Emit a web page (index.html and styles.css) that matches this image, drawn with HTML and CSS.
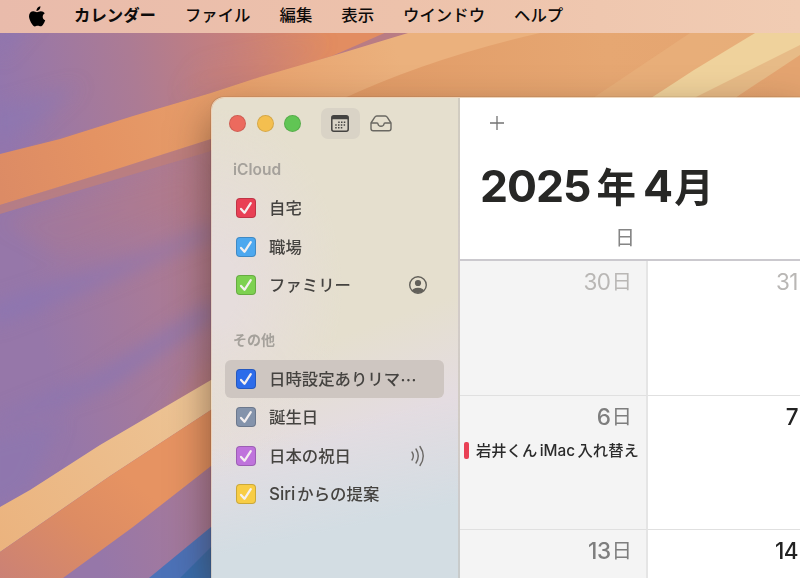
FILE: index.html
```html
<!DOCTYPE html>
<html lang="ja">
<head>
  <meta charset="UTF-8">
  <meta name="viewport" content="width=device-width, initial-scale=1.0">
  <title>カレンダー</title>
  <link rel="stylesheet" href="styles.css">
</head>
<body>
<svg class="wallpaper" viewBox="0 0 800 578" preserveAspectRatio="none" aria-hidden="true">
  <defs>
    <linearGradient id="base" gradientUnits="userSpaceOnUse" x1="0" y1="180" x2="230" y2="120">
      <stop offset="0" stop-color="#9677a9"/>
      <stop offset="0.5" stop-color="#a87a98"/>
      <stop offset="1" stop-color="#b97c84"/>
    </linearGradient>
    <linearGradient id="top" gradientUnits="userSpaceOnUse" x1="0" y1="90" x2="330" y2="30">
      <stop offset="0" stop-color="#9376ad"/>
      <stop offset="0.4" stop-color="#ac7b94"/>
      <stop offset="0.7" stop-color="#c67f7c"/>
      <stop offset="1" stop-color="#e28d61"/>
    </linearGradient>
    <linearGradient id="orange" gradientUnits="userSpaceOnUse" x1="0" y1="190" x2="400" y2="60">
      <stop offset="0" stop-color="#dc8b65"/>
      <stop offset="0.25" stop-color="#e49363"/>
      <stop offset="0.6" stop-color="#e7a06c"/>
      <stop offset="1" stop-color="#ebb17d"/>
    </linearGradient>
    <linearGradient id="right" gradientUnits="userSpaceOnUse" x1="350" y1="90" x2="780" y2="60">
      <stop offset="0" stop-color="#e19b67"/>
      <stop offset="0.6" stop-color="#e6a772"/>
      <stop offset="1" stop-color="#e4a470"/>
    </linearGradient>
    <linearGradient id="cream" gradientUnits="userSpaceOnUse" x1="0" y1="550" x2="210" y2="400">
      <stop offset="0" stop-color="#ebb37e"/>
      <stop offset="1" stop-color="#edc596"/>
    </linearGradient>
    <linearGradient id="lower" gradientUnits="userSpaceOnUse" x1="10" y1="600" x2="120" y2="470">
      <stop offset="0" stop-color="#c98077"/>
      <stop offset="0.6" stop-color="#dd8c63"/>
      <stop offset="1" stop-color="#e69362"/>
    </linearGradient>
    <filter id="soft" x="-20%" y="-20%" width="140%" height="140%"><feGaussianBlur stdDeviation="9"/></filter>
  </defs>
  <rect width="800" height="578" fill="url(#base)"/>
  <g filter="url(#soft)">
    <path d="M-10 306 150 252 215 225 215 235 90 288 -10 326Z" fill="#8976b4" opacity=".75"/>
    <path d="M-10 420 90 380 215 300 215 316 110 385 -10 426Z" fill="#8575b5" opacity=".75"/>
    <path d="M-20 440 60 420 30 490 -20 520Z" fill="#8b76b3" opacity=".6"/>
    <path d="M0 222 190 170 210 200 60 255Z" fill="#ba7f82" opacity=".2"/>
    <path d="M140 450 215 350 215 385Z" fill="#c07f76" opacity=".6"/>
  </g>
  <path d="M0 0H460L332 56 211 93 0 154Z" fill="url(#top)"/>
  <g filter="url(#soft)">
    <path d="M-10 110 80 85 30 130 -10 140Z" fill="#8b76b3" opacity=".55"/>
    <path d="M0 0H50L0 60Z" fill="#8976b4" opacity=".5"/>
    <path d="M200 66 330 40 260 75 180 95Z" fill="#cd8070" opacity=".2"/>
  </g>
  <path d="M0 205 211 139V151L0 214Z" fill="#c28077" opacity=".7"/>
  <path d="M0 154 60 139 133 116 211 93 260 77 332 56 408 33H800V150H211V139L120 168 0 205Z" fill="url(#orange)"/>
  <path d="M340 100Q430 58 540 33H800V100Z" fill="url(#right)"/>
  <path d="M590 100 690 33H755L650 100Z" fill="#e9b47f" opacity=".6"/>
  <path d="M651 98 694 70 755 33H800V46L735 98Z" fill="#efd29c"/>
  <path d="M694 98 800 45V55L735 98Z" fill="#e7bb87"/>
  <path d="M0 507 30 490 100 445 211 380H220V404L110 476 0 552Z" fill="url(#cream)"/>
  <path d="M0 552 110 476 220 404V459L133 527 63 578H0Z" fill="url(#lower)"/>
  <path d="M149 578 211 527H230V578Z" fill="#4c72b8"/>
  <path d="M180 578 211 547H230V578Z" fill="#376cad"/>
</svg>

<header class="menubar">
  <svg class="apple" viewBox="0 0 17 21" aria-hidden="true">
    <path d="M11.9 0.2C12 1.5 11.5 2.7 10.8 3.6 10 4.5 9 5 8 4.9 7.9 3.7 8.4 2.6 9.1 1.8 9.8.9 10.9.3 11.9.2Z"/>
    <path d="M16.3 7.2C14.9 8 14.2 9.2 14.2 10.7 14.2 12.4 15.2 13.7 16.7 14.3 16.2 15.8 15.5 17.2 14.6 18.4 13.9 19.4 13.2 20.3 12.1 20.3 11 20.3 10.6 19.7 9.2 19.7 7.9 19.7 7.4 20.4 6.3 20.4 5.2 20.4 4.4 19.4 3.6 18.3 1.8 15.9.5 12.1.5 10.3.5 7.2 2.5 5.3 4.9 5.3 6.3 5.3 7.5 6.2 8.5 6.2 9.4 6.2 10.7 5.2 12.4 5.2 13.9 5.2 15.4 5.9 16.3 7.2Z"/>
  </svg>
  <nav class="menus">
    <span class="app-name">カレンダー</span>
    <span>ファイル</span>
    <span>編集</span>
    <span>表示</span>
    <span>ウインドウ</span>
    <span>ヘルプ</span>
  </nav>
</header>

<div class="window">
  <aside class="sidebar">
    <div class="toolbar">
      <span class="light close"></span>
      <span class="light minimize"></span>
      <span class="light expand"></span>
      <button class="tool active" aria-label="カレンダー">
        <svg width="18" height="17" viewBox="0 0 18 17">
          <rect x=".8" y=".8" width="16.4" height="15.4" rx="2" fill="none" stroke="#444341" stroke-width="1.5"/>
          <path d="M1 1H17V4.3H1Z" fill="#444341"/>
          <path d="M7.2 7.2H15M4.2 10H15M4.2 12.8H12.2" stroke="#444341" stroke-width="1.5" stroke-dasharray="1.5 1.3"/>
        </svg>
      </button>
      <button class="tool" aria-label="受信">
        <svg width="22" height="17" viewBox="0 0 22 17" fill="none" stroke="#6a6862" stroke-width="1.4" stroke-linejoin="round">
          <path d="M1 8 4.8 2.2Q5.5 1 6.8 1H15.2Q16.5 1 17.2 2.2L21 8V13.5Q21 15.7 18.8 15.7H3.2Q1 15.7 1 13.5Z"/>
          <path d="M1 8H7Q8 8 8 9 8.3 11.2 11 11.2T14 9Q14 8 15 8H21"/>
        </svg>
      </button>
    </div>

    <h2 class="group-title">iCloud</h2>
    <ul class="calendars">
      <li><span class="check red"><svg viewBox="0 0 20 20"><path d="M4.5 11 8.3 15.3 15.3 4.7"/></svg></span>自宅</li>
      <li><span class="check sky"><svg viewBox="0 0 20 20"><path d="M4.5 11 8.3 15.3 15.3 4.7"/></svg></span>職場</li>
      <li><span class="check green"><svg viewBox="0 0 20 20"><path d="M4.5 11 8.3 15.3 15.3 4.7"/></svg></span>ファミリー
        <svg class="badge" width="20" height="20" viewBox="0 0 20 20">
          <defs><clipPath id="face"><circle cx="10" cy="10" r="8"/></clipPath></defs>
          <circle cx="10" cy="10" r="8.3" fill="none" stroke="#62605a" stroke-width="1.4"/>
          <circle cx="10" cy="8" r="3.1" fill="#62605a"/>
          <ellipse cx="10" cy="16.8" rx="6.5" ry="4" fill="#62605a" clip-path="url(#face)"/>
        </svg>
      </li>
    </ul>

    <h2 class="group-title other">その他</h2>
    <ul class="calendars">
      <li class="selected"><span class="check blue"><svg viewBox="0 0 20 20"><path d="M4.5 11 8.3 15.3 15.3 4.7"/></svg></span>日時設定ありリマ<span class="dots">…</span></li>
      <li><span class="check gray"><svg viewBox="0 0 20 20"><path d="M4.5 11 8.3 15.3 15.3 4.7"/></svg></span>誕生日</li>
      <li><span class="check purple"><svg viewBox="0 0 20 20"><path d="M4.5 11 8.3 15.3 15.3 4.7"/></svg></span>日本の祝日
        <svg class="badge" width="20" height="22" viewBox="0 0 20 22" fill="none" stroke="#6b6865" stroke-width="1.4" stroke-linecap="round">
          <path d="M4 7Q6.6 11 4 15M8 4Q12.5 11 8 18M12 1.5Q18.5 11 12 20.5"/>
        </svg>
      </li>
      <li><span class="check yellow"><svg viewBox="0 0 20 20"><path d="M4.5 11 8.3 15.3 15.3 4.7"/></svg></span><span class="latin">Siri</span>からの提案</li>
    </ul>
  </aside>

  <main class="month">
    <div class="month-head">
      <svg class="add" width="14" height="14" viewBox="0 0 14 14"><path d="M7 0V14M0 7H14"/></svg>
      <h1><span class="num">2025</span>年<span class="num inner">4</span>月</h1>
      <div class="weekday">日</div>
    </div>
    <div class="grid">
      <div class="day weekend outside"><div class="date">30<span>日</span></div></div>
      <div class="day outside"><div class="date">31</div></div>
      <div class="day weekend">
        <div class="date">6<span>日</span></div>
        <div class="event"><i></i>岩井くん<span class="word">iMac</span>入れ替え</div>
      </div>
      <div class="day"><div class="date">7</div></div>
      <div class="day weekend"><div class="date">13<span>日</span></div></div>
      <div class="day"><div class="date">14</div></div>
    </div>
  </main>
</div>
</body>
</html>
```

FILE: styles.css
```css
* {
  margin: 0;
  padding: 0;
  box-sizing: border-box;
}

body {
  position: relative;
  width: 800px;
  height: 578px;
  overflow: hidden;
  font-family: Inter, "Noto Sans CJK JP", sans-serif;
  font-size: 16.4px;
  color: #454340;
  text-autospace: no-autospace;
}

.wallpaper {
  position: absolute;
  top: 0;
  left: 0;
  width: 800px;
  height: 578px;
}

/* menu bar */
.menubar {
  position: relative;
  display: flex;
  align-items: center;
  height: 33px;
  padding-left: 28px;
  background: linear-gradient(to right, #e9bbab, #edc2ab 50%, #f1ccb3);
  color: #0d0b0a;
}

.apple {
  width: 18px;
  height: 21px;
  margin-top: -1px;
}

.menus {
  display: flex;
  gap: 29px;
  margin-left: 28px;
  padding-bottom: 2px;
  font-weight: 500;
  line-height: 31px;
  white-space: nowrap;
}

.app-name {
  font-weight: 700;
}

/* window */
.window {
  position: absolute;
  top: 97px;
  left: 211px;
  display: flex;
  width: 589px;
  height: 481px;
  border: 1px solid rgba(240, 225, 205, 0.8);
  border-width: 1px 0 0 1px;
  border-radius: 13px 0 0 0;
  overflow: hidden;
  box-shadow: 0 0 1px rgba(0, 0, 0, 0.6), 0 18px 42px rgba(60, 35, 20, 0.55);
}

.sidebar {
  flex: none;
  width: 248px;
  padding: 0 14px 0 13px;
  border-right: 2px solid rgba(190, 186, 180, 0.5);
  background:
    linear-gradient(168deg, rgba(211, 221, 227, 0) 66%, #d3dde3 86%),
    radial-gradient(ellipse 130px 180px at 0 190px, #e6dddc 20%, rgba(230, 221, 220, 0)),
    linear-gradient(160deg, #e5dfce 0, #e5dfce 50%, #e4dce1 68%, #e4dce1 100%);
}

.toolbar {
  display: flex;
  align-items: center;
  height: 51px;
  padding-left: 4px;
}

.light {
  width: 17px;
  height: 17px;
  margin-right: 10.5px;
  border: 1px solid rgba(0, 0, 0, 0.12);
  border-radius: 50%;
}

.close { background: #ec6a5e; }
.minimize { background: #f4bf4f; }
.expand { background: #61c554; }

.tool {
  display: flex;
  align-items: center;
  justify-content: center;
  width: 39px;
  height: 31px;
  border: 0;
  border-radius: 7px;
  background: none;
}

.tool.active {
  margin-left: 9px;
  margin-right: 2px;
  background: #d9d3c6;
}

.group-title {
  margin-top: 1px;
  padding-left: 8px;
  font-size: 15.5px;
  font-weight: 600;
  line-height: 39px;
  color: #a5a19b;
}

.group-title.other {
  margin-top: 16px;
  font-size: 14px;
  line-height: 38px;
  padding-bottom: 1px;
}

.calendars {
  list-style: none;
}

.calendars li {
  display: flex;
  align-items: center;
  height: 38.5px;
  padding: 0 16px 0 11px;
  border-radius: 6px;
  font-weight: 500;
  line-height: 36px;
  white-space: nowrap;
}

.calendars .selected {
  background: #cec6c1;
}

.check {
  width: 20px;
  height: 20px;
  margin-right: 13px;
  border: 1px solid rgba(0, 0, 0, 0.18);
  border-radius: 4px;
}

.check svg {
  display: block;
  width: 18px;
  height: 18px;
  fill: none;
  stroke: #f5f0f0;
  stroke-width: 2.5;
  stroke-linecap: round;
  stroke-linejoin: round;
}

.red { background: #e94055; }
.sky { background: #4da8ef; }
.green { background: #7dd150; }
.blue { background: #2d6cea; }
.gray { background: #8493ab; }
.purple { background: #bf73dc; }
.yellow { background: #f8cd45; }

.badge {
  margin-left: auto;
}

.latin {
  margin-right: 2px;
  font-size: 17px;
}

.dots {
  font-family: "Noto Sans CJK JP", sans-serif;
}

/* month view */
.month {
  flex: 1;
  min-width: 0;
  background: #fff;
}

.month-head {
  height: 163px;
  padding-top: 18px;
  border-bottom: 2px solid #cbc9ce;
}

.add {
  display: block;
  margin-left: 30px;
  stroke: #737373;
  stroke-width: 1.3;
}

.month-head h1 {
  display: flex;
  align-items: baseline;
  margin-left: 20px;
  padding-top: 25px;
  font-size: 39.5px;
  font-weight: 700;
  line-height: 62px;
  color: #272725;
}

.num {
  margin-right: 6px;
  font-size: 44.5px;
  letter-spacing: -1px;
}

.num.inner {
  margin: 0 2px 0 7px;
}

.weekday {
  width: 187px;
  padding-right: 12px;
  text-align: right;
  font-size: 20px;
  line-height: 38px;
  color: #858585;
}

.grid {
  display: grid;
  grid-template-columns: 188px 153px;
  grid-auto-rows: 134.5px;
}

.day {
  border-bottom: 1px solid #e0e0e0;
  background: #fff;
  color: #222;
}

.weekend {
  border-right: 2px solid #e5e5e5;
  background: #f4f4f4;
  color: #7e7e7e;
}

.day.outside {
  color: #b9b7b5;
}

.date {
  display: flex;
  justify-content: flex-end;
  align-items: center;
  padding-right: 3px;
  font-size: 22.5px;
  font-weight: 500;
  letter-spacing: -0.5px;
  line-height: 42px;
}

.outside .date {
  font-weight: 400;
}

.weekend .date {
  padding-right: 14.5px;
}

.date span {
  margin-left: 1px;
  font-size: 20.5px;
  font-weight: 400;
}

.event {
  display: flex;
  align-items: center;
  padding-left: 4px;
  font-size: 15.3px;
  font-weight: 500;
  line-height: 25px;
  color: #2b2b2b;
  white-space: nowrap;
}

.event i {
  width: 5px;
  height: 17px;
  margin-right: 7px;
  border-radius: 2px;
  background: #e94055;
}

.word {
  margin: 0 2.5px;
}
```
